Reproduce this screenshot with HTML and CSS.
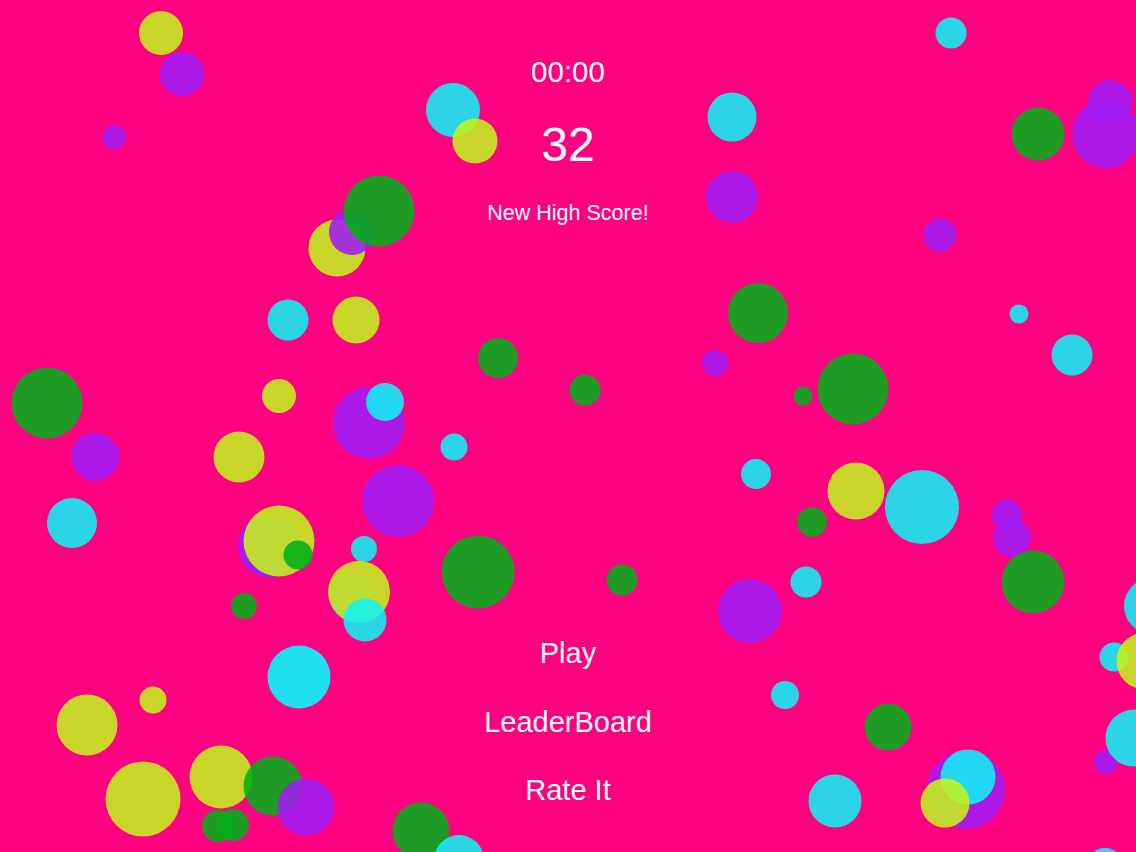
FILE: index.html
```html
<!DOCTYPE html>
<html lang="en">
<head>
<meta charset="utf-8">
<title>Bubbles</title>
<link rel="stylesheet" href="styles.css">
</head>
<body>
<main class="screen">
  <svg class="bubbles" width="1136" height="852" viewBox="0 0 1136 852" aria-hidden="true">
    <circle class="y" cx="161" cy="33" r="22"/>
    <circle class="p" cx="182" cy="74" r="22"/>
    <circle class="p" cx="114" cy="137" r="12"/>
    <circle class="c" cx="453" cy="110" r="27"/>
    <circle class="y" cx="475" cy="141" r="22.5"/>
    <circle class="c" cx="732" cy="117" r="24.5"/>
    <circle class="p" cx="732" cy="197" r="26"/>
    <circle class="c" cx="951" cy="33" r="15.5"/>
    <circle class="g" cx="1038" cy="134" r="26.5"/>
    <circle class="p" cx="1110" cy="102" r="22"/>
    <circle class="p" cx="1106" cy="134" r="34"/>
    <circle class="p" cx="940" cy="235" r="16.5"/>
    <circle class="y" cx="337" cy="248" r="28.5"/>
    <circle class="p" cx="352" cy="232" r="23"/>
    <circle class="g" cx="379" cy="211" r="35.5"/>
    <circle class="c" cx="288" cy="320" r="20.5"/>
    <circle class="y" cx="356" cy="320" r="23.5"/>
    <circle class="g" cx="758" cy="313" r="30"/>
    <circle class="c" cx="1019" cy="314" r="9.5"/>
    <circle class="c" cx="1072" cy="355" r="20.5"/>
    <circle class="g" cx="498" cy="358" r="20"/>
    <circle class="g" cx="585" cy="390" r="15.5"/>
    <circle class="p" cx="715" cy="363" r="13"/>
    <circle class="g" cx="803" cy="396" r="9.5"/>
    <circle class="g" cx="853" cy="389" r="35.5"/>
    <circle class="g" cx="47" cy="403" r="35.5"/>
    <circle class="y" cx="279" cy="396" r="17"/>
    <circle class="p" cx="369" cy="423" r="36"/>
    <circle class="c" cx="385" cy="402" r="19"/>
    <circle class="c" cx="454" cy="447" r="13.5"/>
    <circle class="p" cx="95" cy="457" r="24"/>
    <circle class="y" cx="239" cy="457" r="25.5"/>
    <circle class="c" cx="756" cy="474" r="15"/>
    <circle class="y" cx="856" cy="491" r="28.5"/>
    <circle class="c" cx="922" cy="507" r="37"/>
    <circle class="c" cx="72" cy="523" r="25"/>
    <circle class="p" cx="398" cy="501" r="36"/>
    <circle class="p" cx="270" cy="546" r="32"/>
    <circle class="y" cx="279" cy="541" r="35.5"/>
    <circle class="g" cx="298" cy="555" r="14.5"/>
    <circle class="c" cx="364" cy="549" r="13"/>
    <circle class="g" cx="812" cy="522" r="15"/>
    <circle class="p" cx="1007" cy="515" r="15.5"/>
    <circle class="p" cx="1012" cy="538" r="19"/>
    <circle class="g" cx="478" cy="572" r="36.5"/>
    <circle class="g" cx="622" cy="580" r="15.5"/>
    <circle class="c" cx="806" cy="582" r="15.5"/>
    <circle class="g" cx="1033" cy="582" r="31.5"/>
    <circle class="p" cx="750" cy="611" r="32"/>
    <circle class="g" cx="244" cy="606" r="13"/>
    <circle class="p" cx="352" cy="598" r="23"/>
    <circle class="y" cx="359" cy="592" r="31"/>
    <circle class="c" cx="365" cy="620" r="21.5"/>
    <circle class="c" cx="1152" cy="606" r="28"/>
    <circle class="c" cx="1114" cy="657" r="14.5"/>
    <circle class="y" cx="1145" cy="661" r="28.5"/>
    <circle class="c2" cx="299" cy="677" r="31.5"/>
    <circle class="y" cx="153" cy="700" r="13.5"/>
    <circle class="y" cx="87" cy="725" r="30.5"/>
    <circle class="c" cx="785" cy="695" r="14"/>
    <circle class="g" cx="888" cy="727" r="23.5"/>
    <circle class="p" cx="1106" cy="762" r="12"/>
    <circle class="c" cx="1134" cy="738" r="28.5"/>
    <circle class="y" cx="143" cy="799" r="37.5"/>
    <circle class="y" cx="221" cy="777" r="31.5"/>
    <circle class="g" cx="273" cy="786" r="29.5"/>
    <circle class="p" cx="306" cy="807" r="28.5"/>
    <circle class="g" cx="218" cy="826" r="16"/>
    <circle class="g" cx="233" cy="825" r="16"/>
    <circle class="g" cx="421" cy="831" r="28.5"/>
    <circle class="c" cx="459" cy="860" r="25"/>
    <circle class="c" cx="835" cy="801" r="26.5"/>
    <circle class="p" cx="966" cy="790" r="39"/>
    <circle class="c" cx="968" cy="777" r="27.5"/>
    <circle class="y" cx="945" cy="803" r="24.5"/>
    <circle class="c" cx="1105" cy="866" r="18"/>
  </svg>

  <section class="hud">
    <div class="timer">00:00</div>
    <div class="score">32</div>
    <div class="notice">New High Score!</div>
  </section>

  <nav class="menu">
    <div class="menu-item">Play</div>
    <div class="menu-item">LeaderBoard</div>
    <div class="menu-item">Rate It</div>
  </nav>
</main>
</body>
</html>
```

FILE: styles.css
```css
html, body {
  margin: 0;
  padding: 0;
  background: #ff0080;
}

.screen {
  position: relative;
  width: 1136px;
  height: 852px;
  overflow: hidden;
  background: #ff0080;
  display: flex;
  flex-direction: column;
  align-items: center;
  font-family: "Liberation Sans", Arial, sans-serif;
  color: #ffffff;
}

.bubbles {
  position: absolute;
  left: 0;
  top: 0;
}

.bubbles circle {
  opacity: 0.88;
}

.bubbles .y { fill: rgb(193, 244, 28); }
.bubbles .p { fill: rgb(161, 27, 244); }
.bubbles .c { fill: rgb(15, 243, 244); }
.bubbles .c2 { fill: rgb(0, 255, 255); }
.bubbles .g { fill: rgb(0, 175, 23); }

.hud {
  position: relative;
  display: flex;
  flex-direction: column;
  align-items: center;
  gap: 34px;
  padding-top: 57px;
}

.timer {
  font-size: 29.5px;
  line-height: 29.5px;
}

.score {
  font-size: 48px;
  line-height: 48px;
}

.notice {
  font-size: 21.5px;
  line-height: 21.5px;
}

.menu {
  position: relative;
  margin-top: auto;
  padding-bottom: 47px;
  display: flex;
  flex-direction: column;
  align-items: center;
  gap: 39.5px;
}

.menu-item {
  font-size: 29px;
  line-height: 29px;
}
```
